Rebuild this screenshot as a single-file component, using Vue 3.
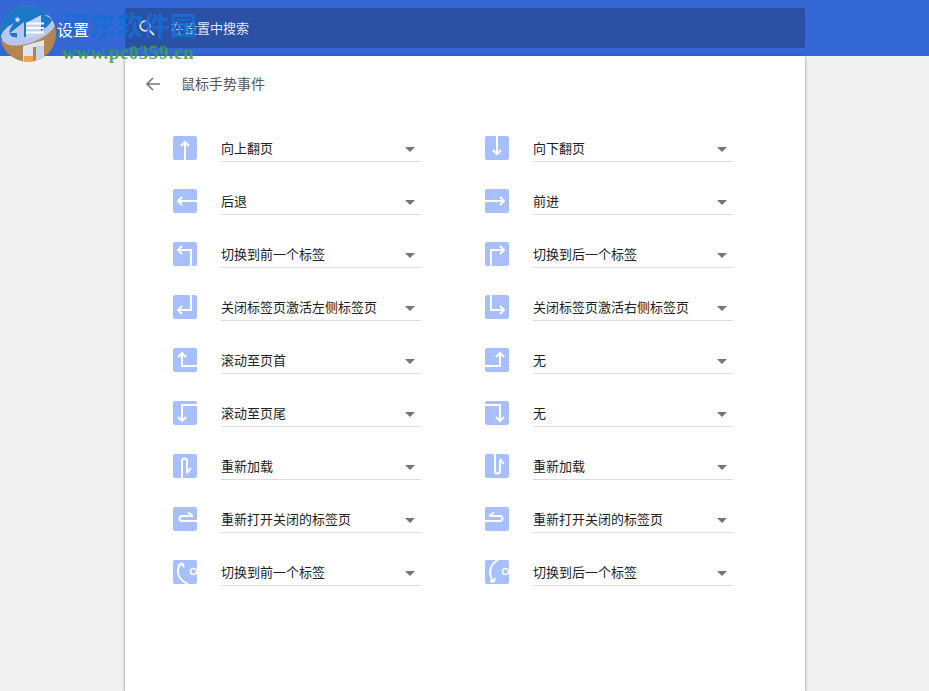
<script setup>
const rows = [
  ['up', '向上翻页', 'down', '向下翻页'],
  ['left', '后退', 'right', '前进'],
  ['prev', '切换到前一个标签', 'next', '切换到后一个标签'],
  ['closeL', '关闭标签页激活左侧标签页', 'closeR', '关闭标签页激活右侧标签页'],
  ['top', '滚动至页首', 'ur', '无'],
  ['bottom', '滚动至页尾', 'dr', '无'],
  ['reloadD', '重新加载', 'reloadU', '重新加载'],
  ['reopenR', '重新打开关闭的标签页', 'reopenL', '重新打开关闭的标签页'],
  ['wheelL', '切换到前一个标签', 'wheelR', '切换到后一个标签'],
]
const items = rows.flatMap(r => [{ icon: r[0], label: r[1] }, { icon: r[2], label: r[3] }])
const paths = {
  up: 'M12 24V6M8 10l4-4 4 4',
  down: 'M12 0V18M8 14l4 4 4-4',
  left: 'M24 12H5M9 8l-4 4 4 4',
  right: 'M0 12H19M15 8l4 4-4 4',
  prev: 'M18 24V8H5M9 4L5 8l4 4',
  next: 'M6 24V8H19M15 4l4 4-4 4',
  closeL: 'M18 0V15H5M9 11l-4 4 4 4',
  closeR: 'M6 0V15H19M15 11l4 4-4 4',
  top: 'M24 18H9V5M5 9l4-4 4 4',
  ur: 'M0 18H15V5M11 9l4-4 4 4',
  bottom: 'M24 4H9V20M5 16l4 4 4-4',
  dr: 'M0 4H15V20M11 16l4 4 4-4',
  reloadD: 'M9 24V7a2.5 2.5 0 0 1 5 0V19M14 19l4-5',
  reloadU: 'M15 5V17a2.5 2.5 0 0 1-5 0V0M15 5l4 5',
  reopenR: 'M24 14H9a2.5 2.5 0 0 1 0-5H20M20 9l-5-3.5',
  reopenL: 'M0 14H15a2.5 2.5 0 0 0 0-5H4M4 9l5-3.5',
  wheelL: 'M9 3C2 9 4 19 15 24M9 3L5 6M9 3l2 4',
  wheelR: 'M13 0C4 5 3 15 9 22M9 22l-4-1M9 22l1-4',
}
</script>

<template>
  <div class="page">
    <header class="bar">
      <div class="brand">
        <svg class="menu" width="18" height="12" viewBox="0 0 18 12"><path d="M0 1.5H18M0 6H18M0 10.500H18" stroke="#fff" stroke-width="2" /></svg>
        <span class="title">设置</span>
      </div>
      <div class="search">
        <svg width="18" height="18" viewBox="0 0 18 18" fill="none"><circle cx="7" cy="7" r="4.800" stroke="#dfe6f5" stroke-width="1.800" /><path d="M10.500 10.500L16 16" stroke="#dfe6f5" stroke-width="1.800" /></svg>
        <span class="placeholder">在设置中搜索</span>
      </div>
    </header>
    <main class="card">
      <div class="heading">
        <svg width="16" height="16" viewBox="0 0 16 16" fill="none"><path d="M15 8H2M8 2L2 8l6 6" stroke="#757575" stroke-width="1.600" /></svg>
        <span class="heading-text">鼠标手势事件</span>
      </div>
      <div class="grid">
        <div v-for="(it, i) in items" :key="i" class="row">
          <svg class="gesture" width="24" height="24" viewBox="0 0 24 24" fill="none">
            <rect width="24" height="24" rx="2" fill="#a8bffe" />
            <path :d="paths[it.icon]" stroke="#fff" stroke-width="2" />
            <circle v-if="it.icon === 'wheelL' || it.icon === 'wheelR'" cx="20.500" cy="11.500" r="3" stroke="#fff" stroke-width="1.600" />
          </svg>
          <div class="select">
            <span class="value">{{ it.label }}</span>
            <i class="caret"></i>
          </div>
        </div>
      </div>
    </main>
    <div class="mark">
      <svg class="logo" width="57" height="63" viewBox="0 0 57 63">
        <defs><clipPath id="disc"><circle cx="28" cy="34" r="28" /></clipPath></defs>
        <g clip-path="url(#disc)">
          <rect width="57" height="63" fill="#b5854f" />
          <path d="M0 0H57V20C50 32 25 44 0 40Z" fill="#1b78c9" />
          <path d="M1 36C3 30 8 26 14 23C8 30 8 36 14 37C26 40 48 30 52 20C50 17 46 16 44 15C50 15 55 18 56 22C56 30 40 42 22 45C10 47 2 44 1 36Z" fill="#b6c8ee" />
          <path d="M10 33L24 22V41H17V33Z" fill="#b6c8ee" />
          <path d="M26 23L41 15V35L26 39Z" fill="#c3d4f2" />
          <path d="M23 46L44 40V47H33V63H23Z" fill="#dfe7f7" />
          <path d="M36 46H44V63H36Z" fill="#c7d5f0" />
          <path d="M24 56H33V63H24Z" fill="#f2a14a" />
        </g>
        <path d="M17.500 16.500l1 2 2 .3-1.500 1.400.4 2-1.900-1-1.900 1 .4-2-1.500-1.400 2-.3z" fill="#cfe0f7" />
      </svg>
      <div class="mark-text">
        <div class="cn">河东软件园</div>
        <div class="url">www.pc0359.cn</div>
      </div>
    </div>
  </div>
</template>

<style scoped>
.page {
  position: relative;
  min-height: 691px;
  height: 691px;
  overflow: hidden;
  background: #f1f1f1;
  font-family: "Noto Sans CJK SC", "Liberation Sans", sans-serif;
  color: #333;
}
.bar {
  display: flex;
  align-items: center;
  height: 56px;
  background: #3367d6;
}
.brand {
  position: relative;
  z-index: 2;
  display: flex;
  align-items: center;
  width: 125px;
  padding-left: 26px;
  box-sizing: border-box;
  color: #fff;
  font-size: 16px;
}
.title { margin: 2px 0 0 13px; }
.search {
  display: flex;
  align-items: center;
  gap: 15px;
  width: 680px;
  height: 40px;
  padding-left: 13px;
  box-sizing: border-box;
  background: #2a51a4;
  border-radius: 2px;
  color: #dfe6f5;
  font-size: 13px;
}
.placeholder { margin-bottom: 2px; }
.card {
  width: 680px;
  height: 635px;
  margin-left: 125px;
  background: #fff;
  box-shadow: 0 1px 3px rgba(0, 0, 0, .45);
}
.heading {
  display: flex;
  align-items: center;
  gap: 20px;
  height: 56px;
  padding-left: 20px;
  font-size: 14px;
  color: #555;
}
.heading-text { margin-bottom: 2px; }
.grid {
  display: grid;
  grid-template-columns: 312px 312px;
  row-gap: 27px;
  padding: 24px 0 0 48px;
}
.row {
  display: flex;
  height: 26px;
}
.gesture { flex: none; }
.select {
  display: flex;
  align-items: center;
  justify-content: space-between;
  width: 200px;
  height: 26px;
  margin-left: 24px;
  padding-right: 6px;
  box-sizing: border-box;
  border-bottom: 1px solid #ddd;
  font-size: 13px;
  color: #222;
}
.value { margin-bottom: 2px; }
.caret {
  width: 0;
  height: 0;
  margin-top: 2px;
  border-left: 5px solid transparent;
  border-right: 5px solid transparent;
  border-top: 5px solid #757575;
}
.mark {
  position: absolute;
  left: 0;
  top: 0;
  display: flex;
  pointer-events: none;
}
.logo { flex: none; }
.mark-text {
  margin-left: 5px;
  padding-top: 9px;
  font-family: "Liberation Serif", serif;
  font-weight: 700;
}
.cn {
  font-family: "Noto Sans CJK SC", sans-serif;
  font-size: 27px;
  line-height: 32px;
  color: rgba(20, 110, 215, .85);
}
.url {
  font-size: 19px;
  line-height: 22px;
  margin-top: 1px;
  letter-spacing: .5px;
  white-space: nowrap;
  color: rgba(60, 160, 70, .9);
}
</style>
